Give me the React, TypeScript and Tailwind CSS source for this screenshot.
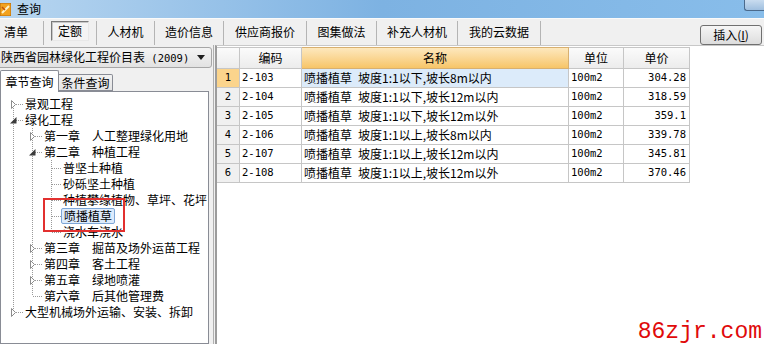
import React from "react";

const cjk = "font-['Noto_Sans_CJK_SC','Liberation_Sans',sans-serif]";
const mono = "font-['DejaVu_Sans_Mono','Noto_Sans_CJK_SC',monospace]";

type TreeRow = {
  label: string;
  level: number;
  kind: "c" | "e" | "l";
  guides: boolean[];
  top: boolean;
  bottom: boolean;
  selected?: boolean;
};

const tree: TreeRow[] = [
  { label: "景观工程", level: 0, kind: "c", guides: [], top: false, bottom: true },
  { label: "绿化工程", level: 0, kind: "e", guides: [], top: true, bottom: true },
  { label: "第一章\u3000人工整理绿化用地", level: 1, kind: "c", guides: [true], top: true, bottom: true },
  { label: "第二章\u3000种植工程", level: 1, kind: "e", guides: [true], top: true, bottom: true },
  { label: "普坚土种植", level: 2, kind: "l", guides: [true, true], top: true, bottom: true },
  { label: "砂砾坚土种植", level: 2, kind: "l", guides: [true, true], top: true, bottom: true },
  { label: "种植攀缘植物、草坪、花坪", level: 2, kind: "l", guides: [true, true], top: true, bottom: true },
  { label: "喷播植草", level: 2, kind: "l", guides: [true, true], top: true, bottom: true, selected: true },
  { label: "浇水车浇水", level: 2, kind: "l", guides: [true, true], top: true, bottom: false },
  { label: "第三章\u3000掘苗及场外运苗工程", level: 1, kind: "c", guides: [true], top: true, bottom: true },
  { label: "第四章\u3000客土工程", level: 1, kind: "c", guides: [true], top: true, bottom: true },
  { label: "第五章\u3000绿地喷灌", level: 1, kind: "c", guides: [true], top: true, bottom: true },
  { label: "第六章\u3000后其他管理费", level: 1, kind: "l", guides: [true], top: true, bottom: false },
  { label: "大型机械场外运输、安装、拆卸", level: 0, kind: "c", guides: [], top: true, bottom: false },
];

const tabs = [
  { label: "清单", w: "w-[44px]", cls: "justify-start pl-[4px]" },
  { label: "定额", w: "w-[53px]", cls: "justify-center", active: true },
  { label: "人材机", w: "w-[58px]", cls: "justify-center" },
  { label: "造价信息", w: "w-[69px]", cls: "justify-center" },
  { label: "供应商报价", w: "w-[83px]", cls: "justify-center" },
  { label: "图集做法", w: "w-[70px]", cls: "justify-center" },
  { label: "补充人材机", w: "w-[81px]", cls: "justify-center" },
  { label: "我的云数据", w: "w-[83px]", cls: "justify-center" },
];

const rows = [
  { code: "2-103", name: "喷播植草\u2002坡度1:1以下,坡长8m以内", unit: "100m2", price: "304.28" },
  { code: "2-104", name: "喷播植草\u2002坡度1:1以下,坡长12m以内", unit: "100m2", price: "318.59" },
  { code: "2-105", name: "喷播植草\u2002坡度1:1以下,坡长12m以外", unit: "100m2", price: "359.1" },
  { code: "2-106", name: "喷播植草\u2002坡度1:1以上,坡长8m以内", unit: "100m2", price: "339.78" },
  { code: "2-107", name: "喷播植草\u2002坡度1:1以上,坡长12m以内", unit: "100m2", price: "345.81" },
  { code: "2-108", name: "喷播植草\u2002坡度1:1以上,坡长12m以外", unit: "100m2", price: "370.46" },
];

const line = { stroke: "#9a9a9a", strokeWidth: 1, strokeDasharray: "1 1" };

// tree connector cells, 19px wide
function Guide({ on }: { on: boolean }) {
  return (
    <svg width="19" height="16" className="shrink-0">
      {on && <line x1="9.5" y1="0" x2="9.5" y2="16" {...line} />}
    </svg>
  );
}

function Own({ r }: { r: TreeRow }) {
  return (
    <svg width="19" height="16" className="shrink-0">
      {r.top && <line x1="9.5" y1="0" x2="9.5" y2="8" {...line} />}
      {r.bottom && <line x1="9.5" y1="8" x2="9.5" y2="16" {...line} />}
      <line x1="10" y1="8.5" x2="19" y2="8.5" {...line} />
      {r.kind === "c" && (
        <polygon points="7.5,4.5 7.5,12.5 11.5,8.5" fill="#ffffff" stroke="#8c8c8c" strokeWidth="1" />
      )}
      {r.kind === "e" && <polygon points="12.5,5 12.5,11.5 6,11.5" fill="#3c3c3c" />}
    </svg>
  );
}

export default function App() {
  return (
    <div className={`relative w-[764px] h-[344px] overflow-hidden bg-[#f0f0f0] flex flex-col text-black ${cjk}`}>
      {/* Title bar */}
      <div className="h-[18px] shrink-0 flex items-start justify-between bg-gradient-to-r from-[#b8d6f0] via-[#7db2e2] to-[#88bdea]">
        <div className="flex items-center h-[18px]">
          <svg width="11" height="13" viewBox="0 0 11 13" className="mt-[1px]">
            <rect x="0" y="0" width="11" height="13" fill="#f2a21e" />
            <rect x="0" y="0" width="11" height="13" fill="none" stroke="#b86a0a" />
            <path d="M2 10 L9 3" stroke="#fff3c8" strokeWidth="2" />
            <path d="M2 4 L5 7" stroke="#c2520a" strokeWidth="1.5" />
          </svg>
          <span className="ml-[6px] text-[12px] leading-[16px]">查询</span>
        </div>
        <div className="w-[20px] h-[11px] rounded-bl-[3px] border border-t-0 border-r-0 border-[#4b6a8c] bg-gradient-to-b from-[#c9dcef] to-[#9fbfdf]" />
      </div>

      {/* Toolbar */}
      <div className="h-[27px] shrink-0 flex items-stretch border-t border-[#fafafa]">
        {tabs.map((t) => (
          <div key={t.label} className={`${t.w} flex items-center ${t.cls} border-r border-[#b4b4b4] mt-[2px] shrink-0`}>
            {t.active ? (
              <span className="w-[38px] h-[20px] -mt-[4px] flex items-center justify-center border border-[#7a7a7a] border-b-[#e8e8e8] border-r-[#e8e8e8] bg-[#f4f4f4] shadow-[inset_1px_1px_0_#c8c8c8] text-[12px]">
                {t.label}
              </span>
            ) : (
              <span className="text-[12px] leading-[16px] -mt-[3px]">{t.label}</span>
            )}
          </div>
        ))}
        <div className="ml-auto mr-[2px] self-end w-[62px] h-[20px] flex items-center justify-center rounded-[3px] border border-[#707070] bg-gradient-to-b from-[#f6f6f6] to-[#dddddd] text-[12px]">
          插入(<span className="underline">I</span>)
        </div>
      </div>

      {/* Main */}
      <div className="flex-1 flex min-h-0">
        {/* Left panel */}
        <div className="w-[214px] shrink-0 flex flex-col border-r border-[#b0b0b0] pt-[2px]">
          <div className="h-[21px] -ml-[3px] mr-[1px] flex items-center justify-between rounded-[3px] border border-[#a6a6a6] bg-gradient-to-b from-[#f4f4f4] to-[#e2e2e2] pl-[3px] pr-[6px]">
            <span className="text-[12px] whitespace-nowrap">
              陕西省园林绿化工程价目表<span className={`${mono} text-[10.5px]`}> (2009)</span>
            </span>
            <svg width="8" height="5" viewBox="0 0 8 5">
              <polygon points="0,0 8,0 4,5" fill="#1e1e1e" />
            </svg>
          </div>
          <div className="h-[23px] flex items-end">
            <div className="w-[59px] h-[22px] flex items-center justify-center bg-white border border-b-0 border-[#898c95] text-[12px] rounded-t-[2px] relative z-10 -mb-[1px]">
              章节查询
            </div>
            <div className="w-[54px] h-[17px] flex items-center justify-center bg-gradient-to-b from-[#f2f2f2] to-[#e4e4e4] border border-l-0 border-[#898c95] text-[12px] rounded-tr-[2px]">
              条件查询
            </div>
          </div>
          <div className="flex-1 mr-[4px] bg-white border border-[#898c95] pt-[4px] pl-[3px] overflow-hidden">
            {tree.map((r, i) => (
              <div key={i} className="flex items-center h-[16px] whitespace-nowrap">
                {r.guides.map((g, j) => (
                  <Guide key={j} on={g} />
                ))}
                <Own r={r} />
                {r.selected ? (
                  <span className="ml-[0px] -mr-[1px] px-[2px] h-[16px] leading-[14px] text-[12px] border border-[#7ea6d6] rounded-[2px] bg-[#dcebfc]">
                    {r.label}
                  </span>
                ) : (
                  <span className="ml-[2px] text-[12px] leading-[16px]">{r.label}</span>
                )}
              </div>
            ))}
          </div>
        </div>

        {/* Right panel */}
        <div className="flex-1 ml-[1px] bg-white border-l-2 border-[#9c9c9c] border-t border-t-[#c8c8c8] pt-[1px]">
          <div className="grid grid-cols-[23px_62px_267px_55px_66px] w-[473px] text-[12px]">
            <div className="h-[22px] bg-gradient-to-b from-[#fbfbfb] to-[#ececec] border-r border-b border-t border-[#c6c6c6]" />
            <div className="h-[22px] flex items-center justify-center bg-gradient-to-b from-[#fbfbfb] to-[#ececec] border-r border-b border-t border-[#c6c6c6]">编码</div>
            <div className="h-[22px] flex items-center justify-center bg-gradient-to-b from-[#fde8bd] to-[#f7c567] border-r border-b border-t border-[#d8b070]">名称</div>
            <div className="h-[22px] flex items-center justify-center bg-gradient-to-b from-[#fbfbfb] to-[#ececec] border-r border-b border-t border-[#c6c6c6]">单位</div>
            <div className="h-[22px] flex items-center justify-center bg-gradient-to-b from-[#fbfbfb] to-[#ececec] border-r border-b border-t border-[#c6c6c6]">单价</div>
            {rows.map((r, i) => (
              <React.Fragment key={r.code}>
                <div
                  className={`h-[19px] flex items-center justify-center border-r border-b border-[#c6c6c6] ${mono} text-[10.5px] ${
                    i === 0 ? "bg-[#fbd48c]" : "bg-[#f0f0f0]"
                  }`}
                >
                  {i + 1}
                </div>
                <div className={`h-[19px] flex items-center pl-[2px] border-r border-b border-[#c6c6c6] ${mono} text-[10.5px]`}>{r.code}</div>
                <div className={`h-[19px] flex items-center pl-[2px] border-r border-b border-[#c6c6c6] whitespace-pre ${i === 0 ? "bg-[#dcebfa]" : ""}`}>
                  {r.name}
                </div>
                <div className={`h-[19px] flex items-center pl-[2px] border-r border-b border-[#c6c6c6] ${mono} text-[10.5px]`}>{r.unit}</div>
                <div className={`h-[19px] flex items-center justify-end pr-[3px] border-r border-b border-[#c6c6c6] ${mono} text-[10.5px]`}>{r.price}</div>
              </React.Fragment>
            ))}
          </div>
        </div>
      </div>

      {/* Annotation box */}
      <div className="absolute left-[43px] top-[198px] w-[82px] h-[34px] border-2 border-[#e2302f]" />

      {/* Watermark */}
      <div className="absolute right-[2px] bottom-[0px] font-['Liberation_Mono',monospace] text-[23px] leading-[24px] text-[#e00a0a]">
        86zjr.com
      </div>
    </div>
  );
}
